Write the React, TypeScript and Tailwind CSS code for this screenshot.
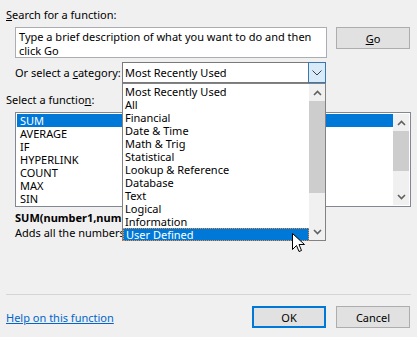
import { FC } from "react";

const categories = [
  "Most Recently Used",
  "All",
  "Financial",
  "Date & Time",
  "Math & Trig",
  "Statistical",
  "Lookup & Reference",
  "Database",
  "Text",
  "Logical",
  "Information",
  "User Defined",
];

const functions = ["SUM", "AVERAGE", "IF", "HYPERLINK", "COUNT", "MAX", "SIN"];

const Chevron: FC<{ up?: boolean }> = ({ up }) => (
  <svg width="9" height="6" viewBox="0 0 9 6">
    <path
      d={up ? "M1 5 L4.5 1.5 L8 5" : "M1 1 L4.5 4.5 L8 1"}
      fill="none"
      stroke="#606060"
      strokeWidth="1.6"
    />
  </svg>
);

// thin chevron for the combo button
const ThinChevron: FC = () => (
  <svg width="10" height="6" viewBox="0 0 10 6">
    <path d="M0.5 0.5 L5 5 L9.5 0.5" fill="none" stroke="#404040" strokeWidth="1" />
  </svg>
);

const Scrollbar: FC<{ thumbTop: number; thumbHeight: number }> = ({ thumbTop, thumbHeight }) => (
  <div className="flex h-full w-[16px] flex-col bg-[#f0f0f0]">
    <div className="flex h-[17px] items-center justify-center">
      <Chevron up />
    </div>
    <div className="relative flex-1">
      <div
        className="absolute left-0 w-[16px] bg-[#cdcdcd]"
        style={{ top: thumbTop, height: thumbHeight }}
      />
    </div>
    <div className="flex h-[17px] items-center justify-center">
      <Chevron />
    </div>
  </div>
);

const App: FC = () => {
  return (
    <div className="relative h-[337px] w-[417px] overflow-hidden whitespace-nowrap bg-[#f0f0f0] font-['Noto_Sans',sans-serif] text-[11px] leading-[13px] text-black">
      {/* Search */}
      <div className="pl-[6px] pt-[8px]">
        <u>S</u>earch for a function:
      </div>
      <div className="mt-[6px] flex items-start pl-[15px]">
        <div className="h-[31px] w-[312px] border border-[#abadb3] bg-white px-[3px] pt-[2px] leading-[14px]">
          Type a brief description of what you want to do and then
          <br />
          click Go
        </div>
        <button className="ml-[9px] h-[22px] w-[74px] border border-[#adadad] bg-[#e1e1e1]">
          <u>G</u>o
        </button>
      </div>

      {/* Category */}
      <div className="mt-[4px] flex items-center pl-[15px]">
        <span className="w-[107px]">
          Or select a <u>c</u>ategory:
        </span>
        <div className="flex h-[21px] w-[204px] border border-[#7a7a7a] bg-white">
          <span className="flex-1 pl-[2px] pt-[3px]">Most Recently Used</span>
          <div className="-my-[1px] -mr-[1px] flex w-[18px] items-center justify-center border border-[#3a76b0] bg-[#d9eaf8]">
            <ThinChevron />
          </div>
        </div>
      </div>

      {/* Function list */}
      <div className="mt-[10px] pl-[6px]">
        Select a functio<u>n</u>:
      </div>
      <div className="ml-[15px] mt-[6px] flex h-[95px] w-[396px] border border-[#828790] bg-white">
        <div className="flex-1 pl-[1px] pt-[1px]">
          {functions.map((f, i) => (
            <div
              key={f}
              className={`h-[13px] pl-[3px] ${i === 0 ? "bg-[#0078d7] text-white" : ""}`}
            >
              {f}
            </div>
          ))}
        </div>
        <div className="py-[1px] pr-[1px]">
          <Scrollbar thumbTop={0} thumbHeight={40} />
        </div>
      </div>

      <div className="mt-[4px] pl-[15px] font-bold">SUM(number1,number2,...)</div>
      <div className="mt-[2px] pl-[15px]">Adds all the numbers in a range of cells.</div>

      {/* Footer */}
      <div className="mx-[6px] mt-[55px] h-px bg-[#d5d5d5]" />
      <div className="mt-[11px] flex items-center pl-[6px] pr-[7px]">
        <a className="flex-1 text-[#0066cc] underline">Help on this function</a>
        <button className="h-[22px] w-[74px] border-2 border-[#0078d7] bg-[#e1e1e1]">OK</button>
        <button className="ml-[10px] h-[22px] w-[74px] border border-[#adadad] bg-[#e1e1e1]">
          Cancel
        </button>
      </div>

      {/* Open category dropdown */}
      <div className="absolute left-[122px] top-[83px] flex h-[158px] w-[204px] border border-[#828282] bg-white">
        <div className="flex-1 pt-[1px]">
          {categories.map((c, i) => (
            <div
              key={c}
              className={`h-[13px] pl-[2px] ${
                i === categories.length - 1
                  ? "border border-dotted border-[#ff8728] bg-[#0078d7] pl-[1px] leading-[11px] text-white"
                  : ""
              }`}
            >
              {c}
            </div>
          ))}
        </div>
        <Scrollbar thumbTop={0} thumbHeight={92} />
      </div>

      {/* Mouse cursor */}
      <svg
        className="absolute left-[292px] top-[233px]"
        width="14"
        height="21"
        viewBox="0 0 14 21"
      >
        <path
          d="M0.5 0.5 L0.5 16.5 L4.5 12.5 L7 18.5 L9.5 17.5 L7 11.5 L12.5 11.5 Z"
          fill="white"
          stroke="black"
          strokeWidth="1"
        />
      </svg>
    </div>
  );
};

export default App;
